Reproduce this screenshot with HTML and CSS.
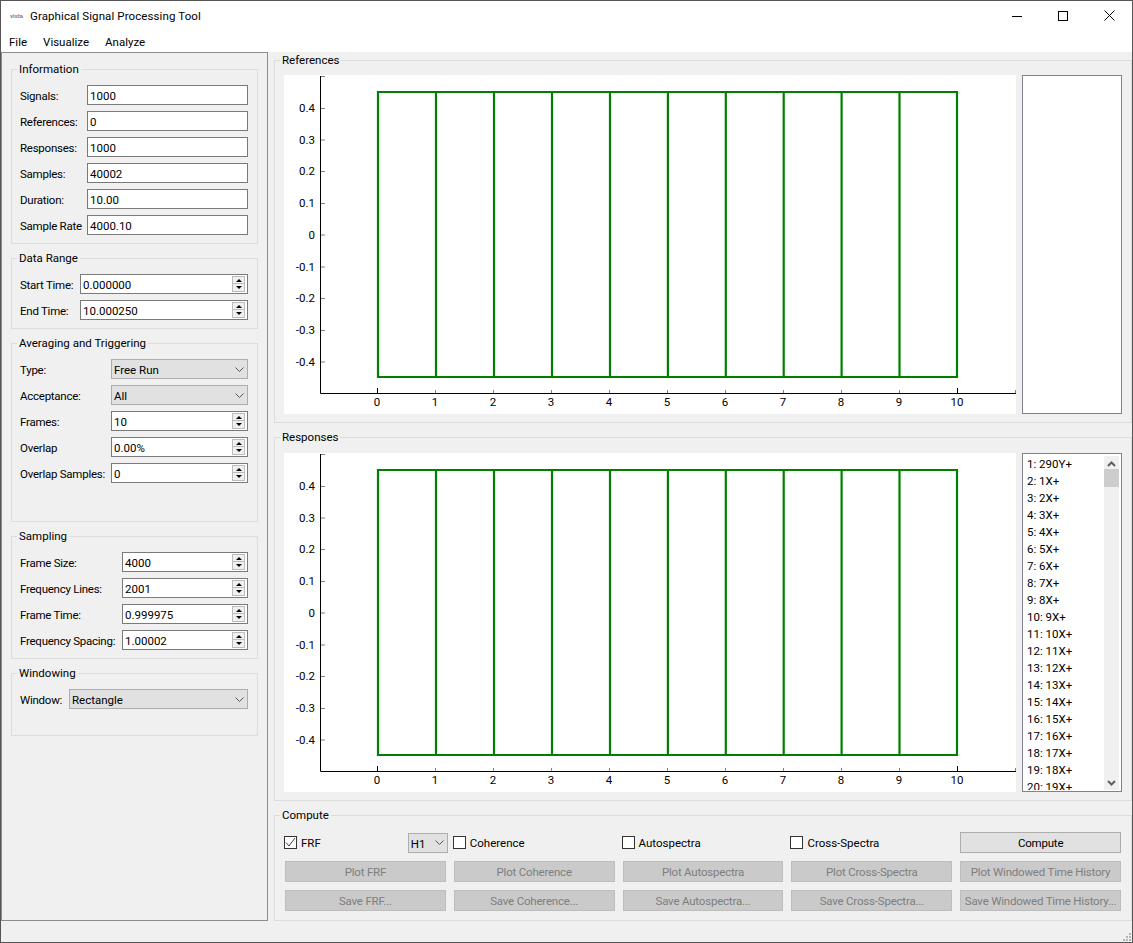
FILE: index.html
```html
<!DOCTYPE html>
<html lang="en">
<head>
  <meta charset="UTF-8">
  <title>Graphical Signal Processing Tool</title>
  <link rel="stylesheet" href="styles.css">
</head>
<body>
<div class="window">
  <header class="titlebar">
    <span class="app-icon">vista</span>
    <span class="title">Graphical Signal Processing Tool</span>
    <div class="win-btns">
      <span class="win-btn"><svg width="10" height="10" viewBox="0 0 10 10"><path d="M0 5.500h10" stroke="#000"/></svg></span>
      <span class="win-btn"><svg width="10" height="10" viewBox="0 0 10 10"><rect x=".5" y=".5" width="9" height="9" fill="none" stroke="#000"/></svg></span>
      <span class="win-btn"><svg width="11" height="11" viewBox="0 0 11 11"><path d="M.5.5l10 10M10.500.5l-10 10" stroke="#000"/></svg></span>
    </div>
  </header>
  <nav class="menubar">
    <span>File</span>
    <span>Visualize</span>
    <span>Analyze</span>
  </nav>

  <main class="main">
    <aside class="side">
      <fieldset class="group">
        <legend>Information</legend>
        <div class="form form-info">
          <label>Signals:</label><div class="field">1000</div>
          <label>References:</label><div class="field">0</div>
          <label>Responses:</label><div class="field">1000</div>
          <label>Samples:</label><div class="field">40002</div>
          <label>Duration:</label><div class="field">10.00</div>
          <label>Sample Rate</label><div class="field">4000.10</div>
        </div>
      </fieldset>

      <fieldset class="group">
        <legend>Data Range</legend>
        <div class="form form-range">
          <label>Start Time:</label><div class="field spin"><span>0.000000</span><i class="spin-btns"><b></b><b></b></i></div>
          <label>End Time:</label><div class="field spin"><span>10.000250</span><i class="spin-btns"><b></b><b></b></i></div>
        </div>
      </fieldset>

      <fieldset class="group group-avg">
        <legend>Averaging and Triggering</legend>
        <div class="form form-avg">
          <label>Type:</label><div class="combo"><span>Free Run</span><svg class="chev" width="9" height="5" viewBox="0 0 9 5"><path d="M.5.5l4 4 4-4" fill="none" stroke="#555"/></svg></div>
          <label>Acceptance:</label><div class="combo"><span>All</span><svg class="chev" width="9" height="5" viewBox="0 0 9 5"><path d="M.5.5l4 4 4-4" fill="none" stroke="#555"/></svg></div>
          <label>Frames:</label><div class="field spin"><span>10</span><i class="spin-btns"><b></b><b></b></i></div>
          <label>Overlap</label><div class="field spin"><span>0.00%</span><i class="spin-btns"><b></b><b></b></i></div>
          <label>Overlap Samples:</label><div class="field spin"><span>0</span><i class="spin-btns"><b></b><b></b></i></div>
        </div>
      </fieldset>

      <fieldset class="group">
        <legend>Sampling</legend>
        <div class="form form-sampling">
          <label>Frame Size:</label><div class="field spin"><span>4000</span><i class="spin-btns"><b></b><b></b></i></div>
          <label>Frequency Lines:</label><div class="field spin"><span>2001</span><i class="spin-btns"><b></b><b></b></i></div>
          <label>Frame Time:</label><div class="field spin"><span>0.999975</span><i class="spin-btns"><b></b><b></b></i></div>
          <label>Frequency Spacing:</label><div class="field spin"><span>1.00002</span><i class="spin-btns"><b></b><b></b></i></div>
        </div>
      </fieldset>

      <fieldset class="group group-window">
        <legend>Windowing</legend>
        <div class="form form-window">
          <label>Window:</label><div class="combo"><span>Rectangle</span><svg class="chev" width="9" height="5" viewBox="0 0 9 5"><path d="M.5.5l4 4 4-4" fill="none" stroke="#555"/></svg></div>
        </div>
      </fieldset>
    </aside>

    <section class="content">
      <fieldset class="group wide">
        <legend>References</legend>
        <div class="plot-row plot-row-top">
          <svg class="plot" width="732" height="339" viewBox="0 0 732 339">
            <path class="axis" d="M36.500 1V318.500H732"/>
            <path class="tick" d="M37 1.500h4M37 33.500h4M37 65h4M37 96.500h4M37 128.500h4M37 160h4M37 192h4M37 223.500h4M37 255.500h4M37 287h4M151.500 315v3M209.500 315v3M267.500 315v3M325.500 315v3M383.500 315v3M441.500 315v3M499.500 315v3M557.500 315v3M615.500 315v3M731.500 315v3"/>
            <path class="tick-major" d="M93.500 313v5M673.500 313v5"/>
            <path class="trace" d="M94 17V302H673V17ZM152 17V302M210 17V302M268 17V302M326 17V302M383.900 17V302M441.800 17V302M499.700 17V302M557.600 17V302M615.500 17V302"/>
            <g class="ylabels">
              <text x="31" y="37">0.4</text><text x="31" y="69">0.3</text><text x="31" y="100">0.2</text><text x="31" y="132">0.1</text><text x="31" y="164">0</text><text x="31" y="196">-0.1</text><text x="31" y="227">-0.2</text><text x="31" y="259">-0.3</text><text x="31" y="291">-0.4</text>
            </g>
            <g class="xlabels">
              <text x="93" y="331">0</text><text x="151" y="331">1</text><text x="209" y="331">2</text><text x="267" y="331">3</text><text x="325" y="331">4</text><text x="383" y="331">5</text><text x="441" y="331">6</text><text x="499" y="331">7</text><text x="557" y="331">8</text><text x="615" y="331">9</text><text x="673" y="331">10</text>
            </g>
          </svg>
          <div class="listbox"></div>
        </div>
      </fieldset>

      <fieldset class="group wide">
        <legend>Responses</legend>
        <div class="plot-row">
          <svg class="plot" width="732" height="339" viewBox="0 0 732 339">
            <path class="axis" d="M36.500 1V318.500H732"/>
            <path class="tick" d="M37 1.500h4M37 33.500h4M37 65h4M37 96.500h4M37 128.500h4M37 160h4M37 192h4M37 223.500h4M37 255.500h4M37 287h4M151.500 315v3M209.500 315v3M267.500 315v3M325.500 315v3M383.500 315v3M441.500 315v3M499.500 315v3M557.500 315v3M615.500 315v3M731.500 315v3"/>
            <path class="tick-major" d="M93.500 313v5M673.500 313v5"/>
            <path class="trace" d="M94 17V302H673V17ZM152 17V302M210 17V302M268 17V302M326 17V302M383.900 17V302M441.800 17V302M499.700 17V302M557.600 17V302M615.500 17V302"/>
            <g class="ylabels">
              <text x="31" y="37">0.4</text><text x="31" y="69">0.3</text><text x="31" y="100">0.2</text><text x="31" y="132">0.1</text><text x="31" y="164">0</text><text x="31" y="196">-0.1</text><text x="31" y="227">-0.2</text><text x="31" y="259">-0.3</text><text x="31" y="291">-0.4</text>
            </g>
            <g class="xlabels">
              <text x="93" y="331">0</text><text x="151" y="331">1</text><text x="209" y="331">2</text><text x="267" y="331">3</text><text x="325" y="331">4</text><text x="383" y="331">5</text><text x="441" y="331">6</text><text x="499" y="331">7</text><text x="557" y="331">8</text><text x="615" y="331">9</text><text x="673" y="331">10</text>
            </g>
          </svg>
          <div class="listbox list-filled">
            <ul class="items">
              <li>1: 290Y+</li><li>2: 1X+</li><li>3: 2X+</li><li>4: 3X+</li><li>5: 4X+</li>
              <li>6: 5X+</li><li>7: 6X+</li><li>8: 7X+</li><li>9: 8X+</li><li>10: 9X+</li>
              <li>11: 10X+</li><li>12: 11X+</li><li>13: 12X+</li><li>14: 13X+</li><li>15: 14X+</li>
              <li>16: 15X+</li><li>17: 16X+</li><li>18: 17X+</li><li>19: 18X+</li><li>20: 19X+</li>
            </ul>
            <div class="scrollbar">
              <svg width="9" height="6" viewBox="0 0 9 6"><path d="M1 5l3.500-3.500L8 5" fill="none" stroke="#606060" stroke-width="2"/></svg>
              <div class="thumb"></div>
              <svg class="scroll-down" width="9" height="6" viewBox="0 0 9 6"><path d="M1 1l3.500 3.500L8 1" fill="none" stroke="#606060" stroke-width="2"/></svg>
            </div>
          </div>
        </div>
      </fieldset>

      <fieldset class="group wide compute">
        <legend>Compute</legend>
        <div class="compute-grid">
          <div class="check-cell">
            <span class="check"><svg width="11" height="11" viewBox="0 0 11 11"><path d="M1 5.500l3 3.500 6-8" fill="none" stroke="#444" stroke-width="1"/></svg></span>
            <span>FRF</span>
            <div class="combo combo-h1"><span>H1</span><svg class="chev" width="9" height="5" viewBox="0 0 9 5"><path d="M.5.5l4 4 4-4" fill="none" stroke="#555"/></svg></div>
          </div>
          <div class="check-cell"><span class="check"></span><span>Coherence</span></div>
          <div class="check-cell"><span class="check"></span><span>Autospectra</span></div>
          <div class="check-cell"><span class="check"></span><span>Cross-Spectra</span></div>
          <button class="btn">Compute</button>

          <button class="btn" disabled>Plot FRF</button>
          <button class="btn" disabled>Plot Coherence</button>
          <button class="btn" disabled>Plot Autospectra</button>
          <button class="btn" disabled>Plot Cross-Spectra</button>
          <button class="btn" disabled>Plot Windowed Time History</button>

          <button class="btn" disabled>Save FRF...</button>
          <button class="btn" disabled>Save Coherence...</button>
          <button class="btn" disabled>Save Autospectra...</button>
          <button class="btn" disabled>Save Cross-Spectra...</button>
          <button class="btn" disabled>Save Windowed Time History...</button>
        </div>
      </fieldset>
    </section>
  </main>

  <footer class="statusbar">
    <svg width="9" height="9" viewBox="0 0 9 9"><path d="M6 0h2v2H6zM3 3h2v2H3zM6 3h2v2H6zM0 6h2v2H0zM3 6h2v2H3zM6 6h2v2H6z" fill="#b5b5b5"/></svg>
  </footer>
</div>
</body>
</html>
```

FILE: styles.css
```css
* { box-sizing: border-box; margin: 0; padding: 0; }
body {
  font-family: Roboto, "Noto Sans", sans-serif;
  font-size: 11.5px;
  color: #000;
  background: #f0f0f0;
}
.window {
  width: 1133px; height: 943px;
  display: flex; flex-direction: column;
  border: 1px solid #555;
  background: #f0f0f0;
  overflow: hidden;
}

/* title + menu */
.titlebar {
  height: 29px; background: #fff;
  display: flex; align-items: center;
  padding-left: 9px;
}
.app-icon {
  width: 15px; margin-right: 5px;
  font-size: 6px; font-weight: 700; color: #7d7f92;
  white-space: nowrap; overflow: hidden;
}
.title { letter-spacing: .1px; }
.win-btns { margin-left: auto; display: flex; }
.win-btn {
  width: 46px; height: 29px;
  display: flex; align-items: center; justify-content: center;
}
.menubar {
  height: 22px; background: #fff;
  display: flex; align-items: center;
  padding-top: 2px;
}
.menubar span { padding: 0 8px; }

/* main layout */
.main { display: flex; height: 869px; }
.side {
  width: 267px; height: 869px; flex-shrink: 0;
  border: 1px solid #8c8c8c;
  padding: 8px 9px 0;
}
.content { margin-left: 6px; flex: 1; }

/* group boxes */
.group {
  border: 1px solid #dcdcdc;
  padding: 0 9px 8px 8px;
  margin-bottom: 6px;
}
.group legend {
  margin-left: -3px; padding: 0 2px;
  line-height: 16px;
}
.group-avg { height: 187px; }
.group-window { height: 71px; }

/* forms on the left */
.form {
  display: grid; row-gap: 6px; padding-top: 8px;
  grid-auto-rows: 20px; align-items: center;
}
.form-info { grid-template-columns: 67px 1fr; }
.form-range { grid-template-columns: 60px 1fr; }
.form-avg { grid-template-columns: 91px 1fr; }
.form-sampling { grid-template-columns: 102px 1fr; }
.form-window { grid-template-columns: 49px 1fr; }
.form label { white-space: nowrap; padding-top: 2px; letter-spacing: -.25px; }

.field {
  height: 20px; background: #fff;
  border: 1px solid #7a7a7a;
  padding: 0 2px; line-height: 20px;
}
.spin { display: flex; justify-content: space-between; }
.spin-btns {
  display: flex; flex-direction: column;
  width: 13px; height: 16px;
  margin-top: 1px;
}
.spin-btns b {
  height: 8px; background: #f0f0f0;
  border: 1px solid #bcbcbc;
  display: flex; align-items: center; justify-content: center;
}
.spin-btns b::after {
  content: ""; width: 0; height: 0;
  border-left: 3px solid transparent;
  border-right: 3px solid transparent;
  border-bottom: 3px solid #000;
}
.spin-btns b + b { border-top: 0; }
.spin-btns b + b::after { border-bottom: 0; border-top: 3px solid #000; }

.combo {
  height: 20px; background: #e1e1e1;
  border: 1px solid #adadad;
  padding: 0 3px 0 2px;
  display: flex; justify-content: space-between; align-items: center;
}
.combo span { line-height: 20px; height: 18px; }

/* plots */
.wide { padding: 0 9px 8px 9px; }
.wide legend { margin-left: -4px; }
.plot-row { display: flex; gap: 6px; padding-top: 8px; }
.plot-row-top { padding-top: 7px; }
.plot { background: #fff; display: block; }
.plot text { font-family: Roboto, "Noto Sans", sans-serif; font-size: 11.5px; fill: #000; }
.ylabels text { text-anchor: end; }
.xlabels text { text-anchor: middle; }
.axis { fill: none; stroke: #000; stroke-width: 1; }
.tick { fill: none; stroke: #808080; stroke-width: 1; }
.tick-major { fill: none; stroke: #000; stroke-width: 1; }
.trace { fill: none; stroke: #008000; stroke-width: 2.2; }

.listbox {
  width: 100px; height: 339px;
  background: #fff;
  border: 1px solid #82828c;
  display: flex;
}
.list-filled { padding: 2px 2px 1px 0; }
.items {
  list-style: none; flex: 1;
  overflow: hidden; padding-left: 4px;
}
.items li { height: 17px; line-height: 17px; }
.scrollbar {
  width: 15px; background: #f0f0f0;
  display: flex; flex-direction: column; align-items: center;
  padding-top: 5px;
}
.thumb { width: 15px; height: 18px; background: #cdcdcd; margin-top: 2px; }
.scroll-down { margin-top: auto; margin-bottom: 4px; }

/* compute box */
.compute { margin-bottom: 0; }
.compute-grid {
  display: grid;
  grid-template-columns: repeat(5, 1fr);
  grid-auto-rows: 21px;
  gap: 8px;
  padding: 9px 1px 1px 1px;
}
.check-cell { display: flex; align-items: center; margin-left: -1px; }
.check {
  width: 13px; height: 13px; margin-right: 4px;
  background: #fff; border: 1px solid #333;
  display: flex; align-items: center; justify-content: center;
}
.combo-h1 { width: 40px; margin-left: auto; margin-right: -2px; flex-shrink: 0; }
.btn {
  font: inherit; color: #000;
  background: #e1e1e1;
  border: 1px solid #adadad;
  letter-spacing: -.2px;
  white-space: nowrap; overflow: hidden;
}
.btn:disabled { background: #cacaca; border-color: #bdbdbd; color: #7e7e7e; }

.statusbar {
  flex: 1;
  display: flex; justify-content: flex-end; align-items: flex-end;
}
```
